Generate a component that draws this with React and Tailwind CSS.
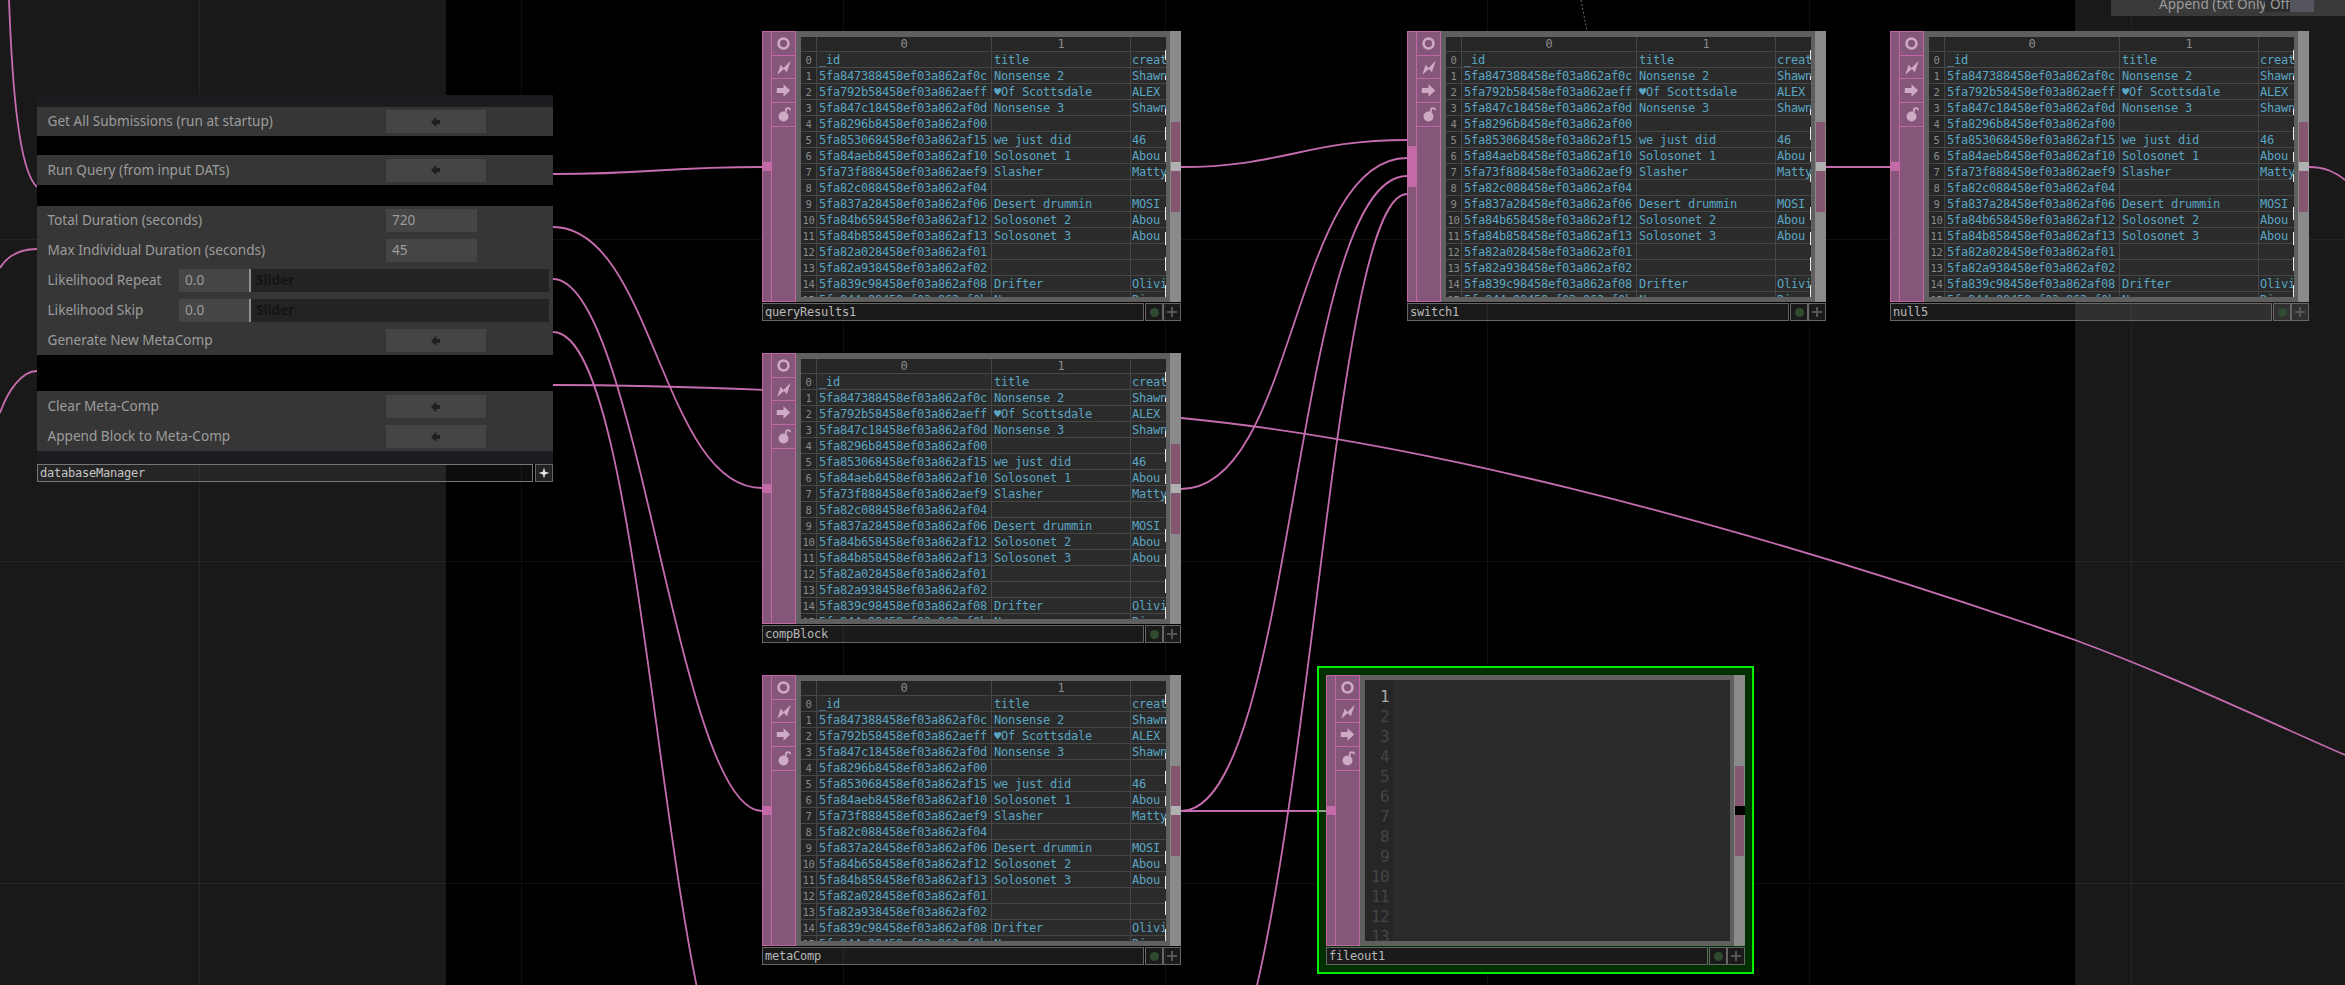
import React from "react";

const mono = "font-['DejaVu_Sans_Mono','Liberation_Mono',monospace]";

const rows = [
  ["_id", "title", "creat"],
  ["5fa847388458ef03a862af0c", "Nonsense 2", "Shawn"],
  ["5fa792b58458ef03a862aeff", "♥Of Scottsdale", "ALEX"],
  ["5fa847c18458ef03a862af0d", "Nonsense 3", "Shawn"],
  ["5fa8296b8458ef03a862af00", "", ""],
  ["5fa853068458ef03a862af15", "we just did", "46"],
  ["5fa84aeb8458ef03a862af10", "Solosonet 1", "Abou"],
  ["5fa73f888458ef03a862aef9", "Slasher", "Matty"],
  ["5fa82c088458ef03a862af04", "", ""],
  ["5fa837a28458ef03a862af06", "Desert drummin", "MOSI"],
  ["5fa84b658458ef03a862af12", "Solosonet 2", "Abou"],
  ["5fa84b858458ef03a862af13", "Solosonet 3", "Abou"],
  ["5fa82a028458ef03a862af01", "", ""],
  ["5fa82a938458ef03a862af02", "", ""],
  ["5fa839c98458ef03a862af08", "Drifter", "Olivi"],
  ["5fa844c98458ef03a862af0b", "N", "Di"],
];

// bits of overflowing cell text that poke out at the table's right edge
const overflowBits = [
  [13, 10], [39, 4], [72, 6], [90, 13], [115, 10], [137, 8], [170, 13], [195, 13], [220, 14], [248, 12],
];

const wires = [
  "M9 0 C12 80 18 170 37 187",
  "M37 249 C20 249 8 255 0 268",
  "M37 371 C22 371 8 390 0 413",
  "M553 174 C653 174 662 167 762 167",
  "M553 227 C653 227 662 488 762 488",
  "M553 279 C638 279 677 811 762 811",
  "M553 332 C653 332 662 1133 762 1133",
  "M553 385 C700 385 950 396 1181 418 C1400 439 1700 510 2075 640 C2170 675 2260 718 2345 755",
  "M1181 167 C1281 167 1307 140 1407 140",
  "M1181 489 C1296 489 1292 158 1407 158",
  "M1181 811 C1296 811 1292 176 1407 176",
  "M1181 1133 C1306 1133 1320 194 1407 194",
  "M1181 811 L1326 811",
  "M1826 167 L1890 167",
  "M2309 167 C2325 167 2335 172 2345 180",
];

const TargetIcon = () => (
  <svg width="24" height="23" viewBox="-12 -11.5 24 23">
    <circle r="5.2" fill="none" stroke="#cfaac5" strokeWidth="2.6" />
    <circle r="1.8" fill="#85567a" />
  </svg>
);

const BoltIcon = () => (
  <svg width="24" height="23" viewBox="-12 -11.5 24 23">
    <path d="M-6.5 7.5 L-3 -3 L0 0.5 L7.5 -7 L3.5 5 L0.5 1.5 Z" fill="#cfaac5" />
  </svg>
);

const ArrowIcon = () => (
  <svg width="24" height="23" viewBox="-12 -11.5 24 23">
    <path d="M-7 -2.5 H0 V-6.5 L7 0 L0 6.5 V2.5 H-7 Z" fill="#cfaac5" />
  </svg>
);

const LockIcon = () => (
  <svg width="24" height="23" viewBox="-12 -11.5 24 23">
    <circle cx="0" cy="2" r="5.2" fill="#cfaac5" />
    <path d="M2.5 -2 V-4.5 C2.5 -7.5 6.5 -7.5 7 -4.5" fill="none" stroke="#cfaac5" strokeWidth="1.8" />
  </svg>
);

const IconColumn = () => (
  <div className="flex w-[24px] flex-col border-y border-r border-[#c267a6] bg-[#85567a]">
    {[TargetIcon, BoltIcon, ArrowIcon, LockIcon].map((Icon, i) => (
      <div key={i} className="flex h-[23.7px] items-center justify-center border-b border-[#c267a6]">
        <Icon />
      </div>
    ))}
  </div>
);

const Label = ({ name, solid }) => {
  const fill = solid ? "bg-[#1a1a1a]" : "bg-white/10";
  return (
    <div className={`mt-px flex h-[18px] gap-px ${mono} text-[12px] tracking-[-0.22px] text-[#b8b8b8]`}>
      <div className={`flex flex-1 items-center border border-[#666] pl-[2px] ${fill}`}>{name}</div>
      <div className={`flex w-[18px] items-center justify-center border border-[#666] ${fill}`}>
        <div className="h-[9px] w-[9px] rounded-full bg-[#2f4a2f]" />
      </div>
      <div className={`-ml-px flex w-[18px] items-center justify-center border border-[#666] ${fill}`}>
        <svg width="12" height="12" viewBox="-6 -6 12 12">
          <path d="M-1 -5 H1 V-1 H5 V1 H1 V5 H-1 V1 H-5 V-1 H-1 Z" fill="#555" />
        </svg>
      </div>
    </div>
  );
};

const Table = () => (
  <div className={`relative h-[260px] w-[365px] overflow-hidden bg-[#2b2b2b] ${mono} text-[12px] leading-[17px] tracking-[-0.22px]`}>
    <div className="flex h-[15px] border-b border-[#464646] leading-[15px] text-[#8a8a8a]">
      <div className="w-[16px] border-r border-[#464646] bg-[#262626]" />
      <div className="w-[175px] border-r border-[#464646] bg-[#262626] text-center">0</div>
      <div className="w-[139px] border-r border-[#464646] bg-[#262626] text-center">1</div>
      <div className="flex-1 bg-[#262626]" />
    </div>
    {rows.map((row, i) => (
      <div key={i} className="flex h-[16px] border-b border-[#464646] text-[#5aa5c2]">
        <div className="w-[16px] border-r border-[#464646] bg-[#262626] text-center text-[10.5px] text-[#8a8a8a]">{i}</div>
        <div className="w-[175px] border-r border-[#464646] pl-[2px]">{row[0]}</div>
        <div className="w-[139px] border-r border-[#464646] pl-[2px]">{row[1]}</div>
        <div className="flex-1 overflow-hidden pl-[1px] whitespace-nowrap">{row[2]}</div>
      </div>
    ))}
    <svg className="absolute right-0 top-0" width="1" height="260">
      {overflowBits.map(([y, h]) => (
        <rect key={y} x="0" y={y} width="1" height={h} fill="#e8e8e8" />
      ))}
    </svg>
  </div>
);

const Editor = () => (
  <div className={`flex h-[261px] w-[365px] overflow-hidden bg-[#2b2b2b] ${mono} text-[16px] leading-[20px] tracking-[-0.6px]`}>
    <div className="w-[28px] bg-[#262626] pt-[7px] pr-[4px] text-right text-[#454545]">
      {Array.from({ length: 13 }, (_, i) => (
        <div key={i} className={i === 0 ? "text-[#a8a8a8]" : ""}>{i + 1}</div>
      ))}
    </div>
  </div>
);

const Node = ({ name, className, wide, dark, editor }) => (
  <div className={`absolute w-[419px] ${className}`}>
    <div className="flex h-[271px]">
      <div className={`w-[10px] border border-[#c267a6] bg-[#85567a] ${wide ? "pt-[114px]" : "pt-[130px]"}`}>
        <div className={`-mx-px bg-[#c46aa8] ${wide ? "h-[41px]" : "h-[9px]"}`} />
      </div>
      <IconColumn />
      <div className={`flex w-[374px] flex-col bg-[#5f5f5f] pl-[5px] ${editor ? "pt-[5px]" : "pt-[6px]"}`}>
        {editor ? <Editor /> : <Table />}
      </div>
      <div className="flex w-[11px] flex-col bg-[#8a8a8a] pt-[91px] pl-px">
        <div className="h-[40px] w-[9px] bg-[#84566f]" />
        <div className={`h-[9px] w-[10px] ${dark ? "bg-black" : "bg-[#b0b0b0]"}`} />
        <div className="h-[41px] w-[9px] bg-[#84566f]" />
      </div>
    </div>
    <Label name={name} solid={editor} />
  </div>
);

const PanelArrow = () => (
  <svg width="12" height="12" viewBox="-6 -6 12 12">
    <path d="M-5 0 L-0.5 -4.5 L0.5 -4.5 L0.5 -2 L4 -2 L4 2 L0.5 2 L0.5 4.5 L-0.5 4.5 Z" fill="#202020" />
  </svg>
);

const ButtonRow = ({ label }) => (
  <div className="flex h-[23px] items-center pl-[10.5px]">
    <span className="w-[338.5px]">{label}</span>
    <div className="flex h-full w-[100px] items-center justify-center bg-[#454545]">
      <PanelArrow />
    </div>
  </div>
);

const FieldRow = ({ label, value }) => (
  <div className="flex h-[23px] items-center pl-[10.5px]">
    <span className="w-[338.5px]">{label}</span>
    <div className="flex h-full w-[91px] items-center bg-[#454545] pl-[6px]">{value}</div>
  </div>
);

const SliderRow = ({ label }) => (
  <div className="flex h-[23px] items-center pl-[10.5px] pr-[4px]">
    <span className="w-[131.5px]">{label}</span>
    <div className="flex h-full w-[70px] items-center bg-[#454545] pl-[6px]">0.0</div>
    <div className="h-full w-[2px] bg-[#8f8f8f]" />
    <div className="flex h-full flex-1 items-center bg-[#232323] pl-[5px] font-bold text-[#141414]">Slider</div>
  </div>
);

const Panel = () => (
  <div className="absolute left-[37px] top-[95px] flex w-[516px] flex-col font-['Noto_Sans','Open_Sans',sans-serif] text-[13.6px] text-[#9c9c9c]">
    <div className="h-[12px] bg-[#1b1c1f]" />
    <div className="bg-[#363636] py-[3px]">
      <ButtonRow label="Get All Submissions (run at startup)" />
    </div>
    <div className="h-[19px] bg-black" />
    <div className="bg-[#363636] py-[3.5px]">
      <ButtonRow label="Run Query (from input DATs)" />
    </div>
    <div className="h-[21px] bg-black" />
    <div className="flex flex-col gap-[7px] bg-[#363636] py-[3px]">
      <FieldRow label="Total Duration (seconds)" value="720" />
      <FieldRow label="Max Individual Duration (seconds)" value="45" />
      <SliderRow label="Likelihood Repeat" />
      <SliderRow label="Likelihood Skip" />
      <ButtonRow label="Generate New MetaComp" />
    </div>
    <div className="h-[36px] bg-black" />
    <div className="flex flex-col gap-[7px] bg-[#363636] pt-[4px] pb-[3px]">
      <ButtonRow label="Clear Meta-Comp" />
      <ButtonRow label="Append Block to Meta-Comp" />
    </div>
    <div className="h-[13px] bg-[#1b1c1f]" />
    <div className={`flex h-[18px] gap-[2px] ${mono} text-[12px] tracking-[-0.22px] text-[#c4c4c4]`}>
      <div className="flex w-[496px] items-center border border-[#777] bg-white/5 pl-[2px]">databaseManager</div>
      <div className="flex flex-1 items-center justify-center border border-[#666] bg-[#222]">
        <svg width="12" height="12" viewBox="-6 -6 12 12">
          <path d="M0 -5.5 L1.2 -1.2 L5.5 0 L1.2 1.2 L0 5.5 L-1.2 1.2 L-5.5 0 L-1.2 -1.2 Z" fill="#e8e8e8" />
        </svg>
      </div>
    </div>
  </div>
);

const TopRightPanel = () => (
  <div className="absolute left-[2111px] right-0 top-0 flex h-[16px] items-start overflow-hidden bg-[#3a3a3a] font-['Noto_Sans','Open_Sans',sans-serif] text-[13.6px] leading-[8px] whitespace-nowrap text-[#9c9c9c]">
    <span className="ml-[48px] w-[106px]">Append (txt Only)</span>
    <div className="flex h-[12px] w-[25px] bg-[#2c2c2c] pl-[5px]">Off</div>
    <div className="h-[12px] w-[24px] bg-[#55555f]" />
  </div>
);

export default function App() {
  const gridX = [199, 521, 843, 1165, 1487, 1809, 2131];
  const gridY = [239, 561, 883];

  return (
    <div className="relative flex h-[985px] w-[2345px] overflow-hidden bg-black">
      <div className="h-full w-[446px] bg-[#191919]" />
      <div className="h-full flex-1 bg-black" />
      <div className="h-full w-[270px] bg-[#191919]" />

      <svg className="absolute left-0 top-0" width="2345" height="985" fill="none">
        {gridX.map((x) => (
          <line key={x} x1={x + 0.5} y1="0" x2={x + 0.5} y2="985" stroke="#fff" strokeOpacity="0.055" />
        ))}
        {gridY.map((y) => (
          <line key={y} x1="0" y1={y + 0.5} x2="2345" y2={y + 0.5} stroke="#fff" strokeOpacity="0.055" />
        ))}
        <line x1="1581" y1="0" x2="1587" y2="31" stroke="#6b7280" strokeDasharray="2 2" />
        {wires.map((d, i) => (
          <path key={i} d={d} stroke="#c56cae" strokeWidth="1.8" />
        ))}
      </svg>

      <TopRightPanel />

      <Node name="queryResults1" className="left-[762px] top-[31px]" />
      <Node name="compBlock" className="left-[762px] top-[353px]" />
      <Node name="metaComp" className="left-[762px] top-[675px]" />
      <Node name="switch1" className="left-[1407px] top-[31px]" wide />
      <Node name="null5" className="left-[1890px] top-[31px]" />

      <div className="absolute left-[1317px] top-[666px] h-[308px] w-[437px] border-2 border-[#00f000] bg-[#003000] pt-[142px]">
        <div className="h-[2px] w-[7px] bg-[#8fa08f]" />
      </div>
      <Node name="fileout1" className="left-[1326px] top-[675px]" dark editor />

      <Panel />
    </div>
  );
}
